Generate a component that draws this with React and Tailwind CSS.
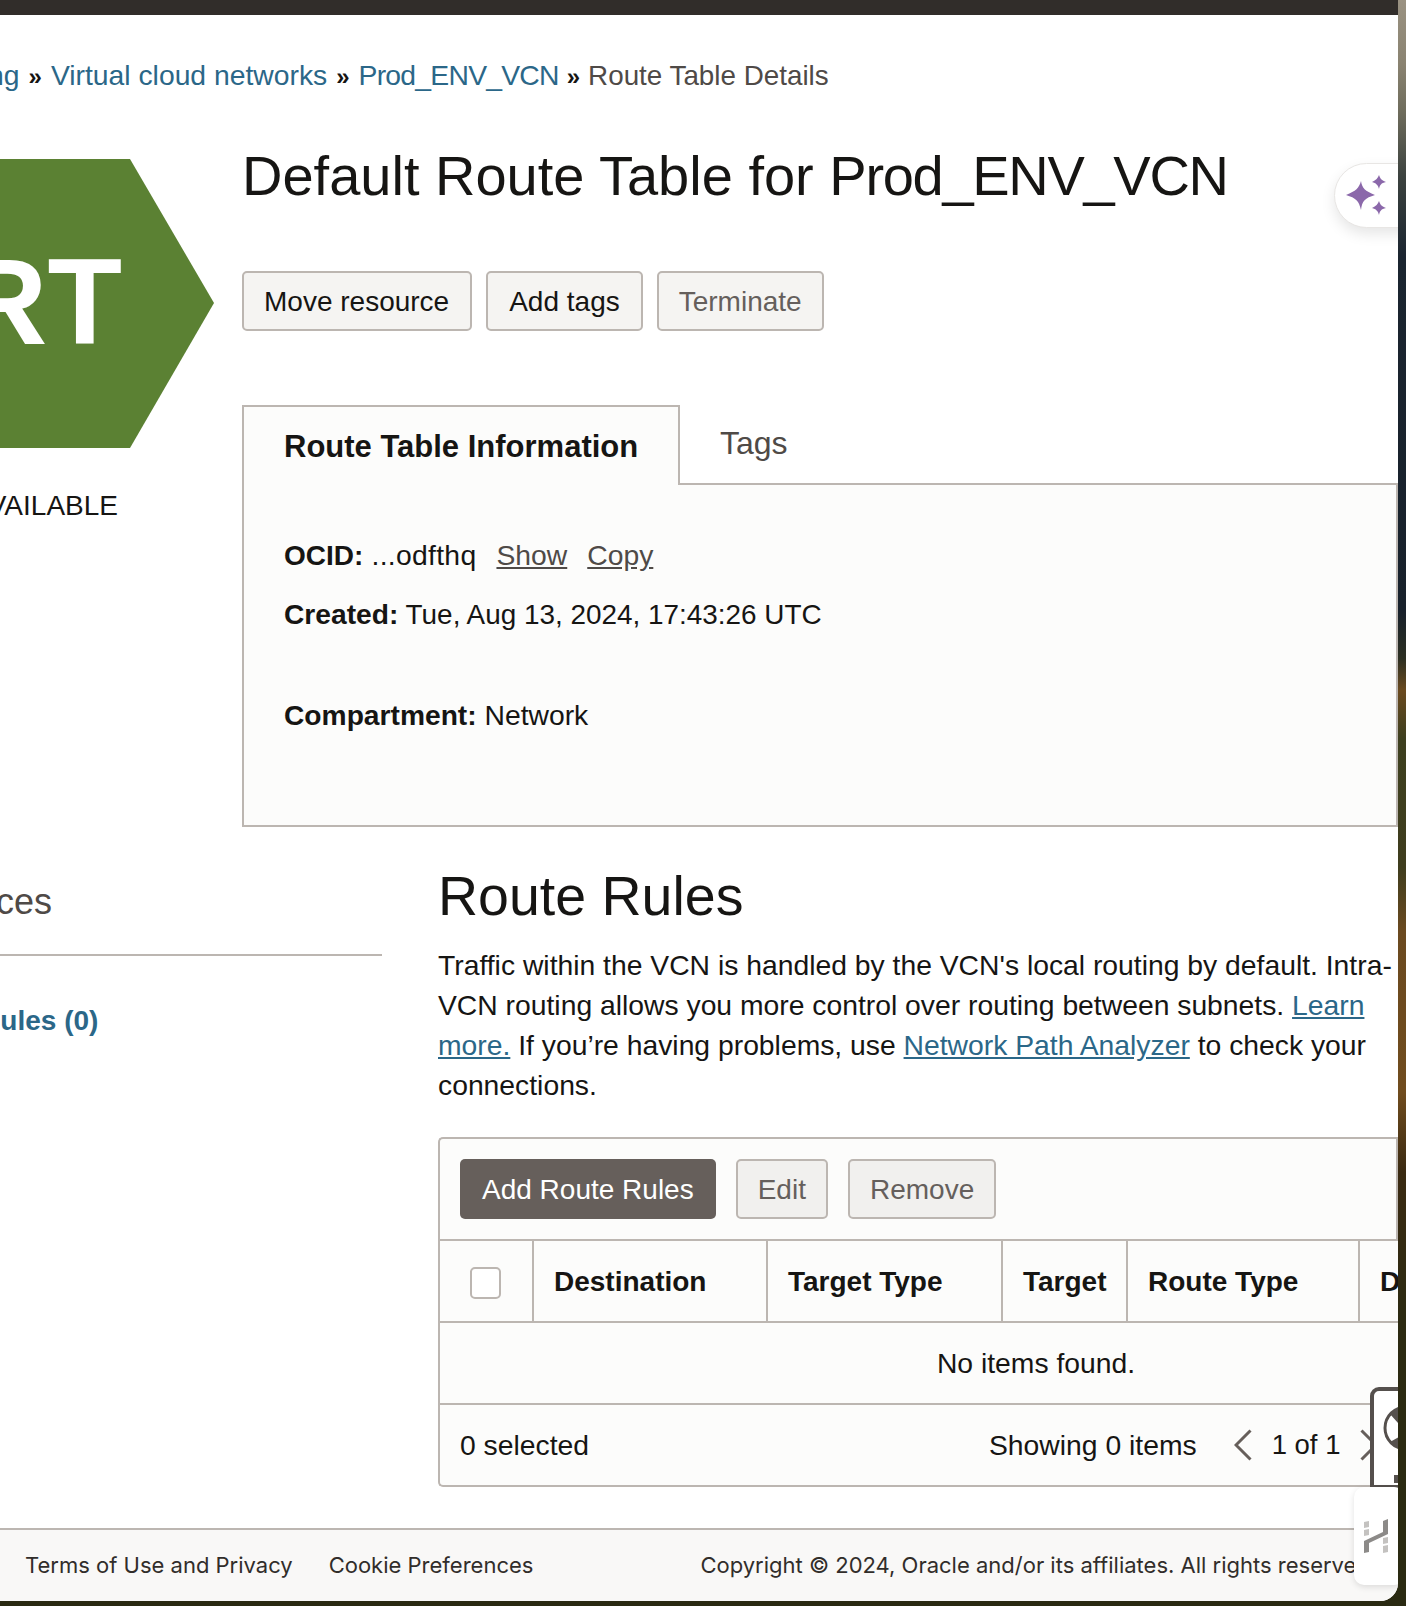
import React from 'react';

const Btn = ({ children, muted, className = '' }) => (
  <button className={`h-[60px] px-[20px] pt-[1px] rounded-[5px] border-2 border-[#bcb6b1] bg-[#f5f4f2] text-[28px] ${muted ? 'text-[#655f5c]' : 'text-[#161513]'} ${className}`}>
    {children}
  </button>
);

const Crumb = ({ children }) => <a className="text-[#2b6788]">{children}</a>;
const Sep = ({ className = 'mx-[9px]' }) => <span className={`${className} text-[24px] font-bold text-[#161513]`}>»</span>;

const Th = ({ w, children }) => (
  <div className={`${w} shrink-0 h-full flex items-center pl-[20px] pt-[2px] border-r-2 border-[#bcb6b1] text-[28px] font-bold text-[#161513] whitespace-nowrap`}>
    {children}
  </div>
);

const Sparkles = () => (
  <svg width="42" height="42" viewBox="0 0 42 42" fill="#8b68aa">
    <path d="M15 6 C16 13 19 16 29 20 C19 23 16 26 15 35 C13 26 10 23 0 20 C10 16 13 13 15 6Z" />
    <path d="M33 0 C34 3 35 5 40 7 C35 8 34 10 33 14 C32 10 30 8 26 7 C30 5 32 3 33 0Z" />
    <path d="M33 26 C34 29 35 31 40 33 C35 34 34 36 33 40 C32 36 30 34 26 33 C30 31 32 29 33 26Z" />
  </svg>
);

const Chevron = ({ dir, className = '' }) => (
  <svg width="18" height="32" viewBox="0 0 18 32" fill="none" stroke="#665f5b" strokeWidth="3" className={`shrink-0 ${className}`}>
    <path d={dir === 'left' ? 'M16.5 1.5 L2 16 L16.5 30.5' : 'M1.5 1.5 L16 16 L1.5 30.5'} />
  </svg>
);

const App = () => {
  return (
    <div className="relative w-[1406px] h-[1606px] overflow-hidden bg-[linear-gradient(180deg,#9a9282_0%,#8a8371_4%,#6e6c5c_7%,#3c423f_11%,#1b2530_16%,#18212b_38%,#2c2f22_41%,#6a4a1f_43%,#3d3f1f_46%,#3f3d1e_54%,#6b4a20_58%,#704c1e_68%,#3a2a12_73%,#2c2a12_82%,#2a2a12_100%)] font-['Liberation_Sans',sans-serif] text-[#161513]">
      <div className="relative w-[1398px] h-[1601px] bg-white rounded-br-[18px] overflow-hidden flex flex-col">
        {/* barra superior */}
        <div className="h-[15px] shrink-0 bg-[#312d2a]"></div>

        {/* breadcrumb */}
        <div className="h-[90px] shrink-0 flex items-center -ml-[122px] text-[28.3px] text-[#4f4a47] whitespace-nowrap pt-[30px]">
          <div className="flex items-baseline">
            <Crumb>Networking</Crumb><Sep />
            <Crumb>Virtual cloud networks</Crumb><Sep />
            <a className="text-[#2b6788] tracking-[-0.75px]">Prod_ENV_VCN</a><Sep className="ml-[8px] mr-[8px]" />
            <span className="text-[27.8px]">Route Table Details</span>
          </div>
        </div>

        {/* cabecera */}
        <div className="flex shrink-0 mt-[54px]">
          <div className="w-[242px] shrink-0 flex flex-col items-end pr-[28px]">
            <div className="relative w-[300px] h-[289px] shrink-0 overflow-hidden">
              <svg width="300" height="289" viewBox="0 0 300 289">
                <polygon points="0,0 216,0 300,144 216,289 0,289" fill="#5b8133" />
              </svg>
              <span className="absolute right-[92px] top-[77px] text-[122px] leading-[132px] font-bold text-white">RT</span>
            </div>
            <div className="text-[28px] mt-[42px] mr-[96px] leading-[32px] whitespace-nowrap">AVAILABLE</div>
          </div>

          <div className="flex-1 min-w-0 -mt-[18px]">
            <h1 className="text-[56px] leading-[70px] whitespace-nowrap">
              Default Route Table for <span className="tracking-[-1.3px]">Prod_ENV_VCN</span>
            </h1>
            <div className="flex gap-[14px] mt-[60px]">
              <Btn className="!pr-[21px]">Move resource</Btn>
              <Btn className="!px-[21px]">Add tags</Btn>
              <Btn muted>Terminate</Btn>
            </div>
            <div className="mt-[72px]">
              <div className="flex items-end h-[82px]">
                <div className="w-[438px] h-[80px] border-2 border-b-0 border-[#bcb6b1] bg-[#fcfcfb] pl-[40px] pt-[20px] text-[31px] font-bold whitespace-nowrap leading-[40px]">
                  Route Table Information
                </div>
                <div className="flex-1 h-[82px] border-b-2 border-[#bcb6b1] pl-[40px] pt-[20px] text-[32px] text-[#4f4a47] leading-[40px]">Tags</div>
              </div>
              <div className="h-[342px] border-2 border-t-0 border-[#bcb6b1] bg-[#fcfcfb] pl-[40px] pt-[50px] text-[28.3px] leading-[40px]">
                <div className="flex gap-[20px]">
                  <span className="tracking-[0.3px]"><b className="text-[28px] tracking-normal">OCID:</b> ...odfthq</span>
                  <a className="underline text-[#4f4a47]">Show</a>
                  <a className="underline text-[#4f4a47]">Copy</a>
                </div>
                <div className="mt-[18px] text-[27.9px]"><b className="text-[28.2px]">Created:</b> Tue, Aug 13, 2024, 17:43:26 UTC</div>
                <div className="mt-[60px]"><b className="text-[28.2px]">Compartment:</b> Network</div>
              </div>
            </div>
          </div>
        </div>

        {/* recursos y reglas */}
        <div className="flex flex-1 min-h-0">
          <div className="w-[382px] shrink-0 mr-[56px] flex flex-col pt-[52px]">
            <div className="w-full h-[77px] border-b-2 border-[#bcb6b1] pt-[1px]">
              <span className="block -ml-[120px] text-[36px] leading-[44px] whitespace-nowrap text-[#4f4a47]">Resources</span>
            </div>
            <div className="w-full mt-[45px] text-[28px] leading-[40px] font-bold text-[#2b6788] whitespace-nowrap">
              <span className="block -ml-[107px]">Route Rules (0)</span>
            </div>
          </div>

          <div className="flex-1 min-w-0 pt-[34px]">
            <h2 className="text-[55.5px] leading-[70px]">Route Rules</h2>
            <p className="text-[28.3px] leading-[40px] mt-[14px]">
              Traffic within the VCN is handled by the VCN's local routing by default. Intra-VCN routing allows you more control over routing between subnets. <a className="underline text-[#2b6788]">Learn more.</a> If you’re having problems, use <a className="underline text-[#2b6788]">Network Path Analyzer</a> to check your connections.
            </p>
            <div className="mt-[32px] h-[350px] border-2 border-r-0 border-[#bcb6b1] rounded-l-[5px] bg-[#fcfcfb] text-[28.3px] overflow-hidden">
              <div className="h-[102px] flex items-center gap-[20px] pl-[20px] border-b-2 border-r-2 border-[#bcb6b1]">
                <button className="h-[60px] px-[22px] pt-[1px] rounded-[5px] bg-[#665f5b] text-[28px] text-white">Add Route Rules</button>
                <Btn muted className="!bg-[#f1f0ee]">Edit</Btn>
                <Btn muted className="!bg-[#f1f0ee]">Remove</Btn>
              </div>
              <div className="h-[82px] flex border-b-2 border-[#bcb6b1]">
                <div className="w-[94px] shrink-0 h-full border-r-2 border-[#bcb6b1] flex items-center justify-center">
                  <div className="w-[31px] h-[32px] rounded-[5px] border-2 border-[#bcb6b1] bg-white mt-[4px] -ml-[1px]"></div>
                </div>
                <Th w="w-[234px]">Destination</Th>
                <Th w="w-[235px]">Target Type</Th>
                <Th w="w-[125px]">Target</Th>
                <Th w="w-[232px]">Route Type</Th>
                <div className="pl-[20px] pt-[2px] flex items-center text-[28px] font-bold whitespace-nowrap">Description</div>
              </div>
              <div className="h-[82px] flex items-center justify-center border-b-2 border-[#bcb6b1] pl-[234px] text-[#161513]">
                No items found.
              </div>
              <div className="h-[80px] flex items-center pl-[20px] whitespace-nowrap">
                <span>0 selected</span>
                <span className="ml-[400px]">Showing 0 items</span>
                <Chevron dir="left" className="ml-[37px]" />
                <span className="ml-[20px] text-[27.5px]">1 of 1</span>
                <Chevron dir="right" className="ml-[20px]" />
              </div>
            </div>
          </div>
        </div>

        {/* pie */}
        <div className="h-[73px] shrink-0 border-t-2 border-[#bcb6b1] bg-[#f9f8f7] flex items-center pl-[25px] pb-[1px] font-['Inter',sans-serif] text-[22px] text-[#312d2a] whitespace-nowrap">
          <a>Terms of Use and Privacy</a>
          <a className="ml-[36px]">Cookie Preferences</a>
          <span className="ml-[167px]">Copyright © 2024, Oracle and/or its affiliates. All rights reserved.</span>
        </div>

        {/* botón flotante de IA */}
        <div className="absolute left-[1334px] top-[163px] w-[80px] h-[65px] rounded-l-[33px] border border-[#e8e6e4] bg-white shadow-[0_6px_14px_rgba(0,0,0,0.1)] pl-[11px] pt-[11px]">
          <Sparkles />
        </div>

        {/* widget de ayuda */}
        <div className="absolute left-[1370px] top-[1387px] w-[60px] h-[102px] border-[4px] border-[#55504d] rounded-tl-[9px] bg-white overflow-hidden">
          <svg width="46" height="46" viewBox="0 0 46 46" className="block mt-[14px] ml-[9px]">
            <circle cx="23" cy="23" r="21" fill="#fff" stroke="#55504d" strokeWidth="3" />
            <path d="M7 9 A21 21 0 0 1 39 9 L23 27Z M7 37 A21 21 0 0 0 39 37 L23 28Z" fill="#55504d" />
          </svg>
          <div className="w-[4px] h-[8px] ml-[20px] mt-[24px] bg-[#55504d]"></div>
        </div>
        <div className="absolute left-[1354px] top-[1487px] w-[50px] h-[98px] rounded-[10px] bg-white shadow-[0_2px_6px_rgba(0,0,0,0.12)] pl-[10px] pt-[32px]">
          <svg width="24" height="34" viewBox="0 0 24 34">
            <path d="M0 22 L19 13 V2 L24 0 V15 L5 24 V33 L0 34Z" fill="#8c8a88" />
            <path d="M0 3 L5 2 V8 L0 9Z M0 11 L5 10 V16 L0 17Z M19 19 L24 18 V24 L19 25Z M19 27 L24 26 V33 L19 34Z" fill="#c4c2c0" />
          </svg>
        </div>
      </div>
    </div>
  );
};

export default App;
